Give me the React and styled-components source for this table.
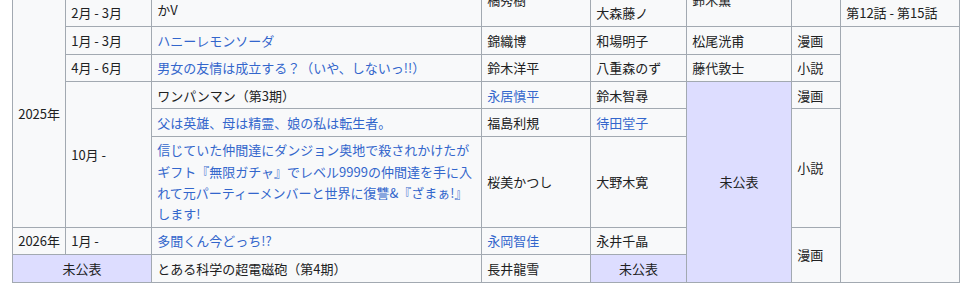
import React from "react"
import styled, { createGlobalStyle } from "styled-components"

const GlobalStyle = createGlobalStyle`
  body {
    margin: 0;
    background: #ffffff;
    font-family: "Noto Sans CJK JP", sans-serif;
    color: #202122;
  }
`

const Frame = styled.div`
  height: 283px;
  overflow: hidden;
  padding-left: 12px;
`

const Table = styled.table`
  margin-top: -56px;
  width: 948px;
  table-layout: fixed;
  border-collapse: collapse;
  border: 1px solid #a2a9b1;
  font-size: 13px;
  line-height: 21.2px;
`

const Cell = styled.td`
  border: 1px solid #a2a9b1;
  padding: 2.6px 5.2px;
  vertical-align: middle;
  white-space: ${p => (p.$nowrap ? "nowrap" : "normal")};
  background: ${p => (p.$tba ? "#ddddff" : "#f8f9fa")};
  text-align: ${p => (p.$tba ? "center" : "left")};
`

const Link = styled.a`
  color: #3366cc;
  text-decoration: none;
`

const widths = [53, 86, 330, 109, 96, 105, 49, 119]

const App = () => {
  return (
    <Frame>
      <GlobalStyle />
      <Table>
        <colgroup>
          {widths.map((w, i) => (
            <col key={i} style={{ width: w }} />
          ))}
        </colgroup>
        <tbody>
          <tr>
            <Cell rowSpan={2} $nowrap>2024年</Cell>
            <Cell rowSpan={2} $nowrap>10月 - 12月</Cell>
            <Cell><Link>魔王2099</Link></Cell>
            <Cell>上田繁</Cell>
            <Cell>小林一三</Cell>
            <Cell>マッドハウス</Cell>
            <Cell rowSpan={3}>小説</Cell>
            <Cell>全12話</Cell>
          </tr>
          <tr>
            <Cell rowSpan={2}>ダンジョンに出会いを求めるのは間違っているだろうかV</Cell>
            <Cell rowSpan={2}>橘秀樹</Cell>
            <Cell>大森藤ノ</Cell>
            <Cell rowSpan={2}>鈴木薫</Cell>
            <Cell>第1話 - 第11話</Cell>
          </tr>
          <tr>
            <Cell rowSpan={6} $nowrap>2025年</Cell>
            <Cell>2月 - 3月</Cell>
            <Cell>大森藤ノ</Cell>
            <Cell $nowrap>第12話 - 第15話</Cell>
          </tr>
          <tr>
            <Cell>1月 - 3月</Cell>
            <Cell><Link>ハニーレモンソーダ</Link></Cell>
            <Cell>錦織博</Cell>
            <Cell>和場明子</Cell>
            <Cell>松尾洸甫</Cell>
            <Cell>漫画</Cell>
            <Cell rowSpan={7}></Cell>
          </tr>
          <tr>
            <Cell>4月 - 6月</Cell>
            <Cell><Link>{"男女の友情は成立する\uFF1F\uFF08いや、しないっ!!\uFF09"}</Link></Cell>
            <Cell>鈴木洋平</Cell>
            <Cell>八重森のず</Cell>
            <Cell>藤代敦士</Cell>
            <Cell>小説</Cell>
          </tr>
          <tr>
            <Cell rowSpan={3}>10月 -</Cell>
            <Cell>{"ワンパンマン\uFF08第3期\uFF09"}</Cell>
            <Cell><Link>永居慎平</Link></Cell>
            <Cell>鈴木智尋</Cell>
            <Cell rowSpan={5} $tba>未公表</Cell>
            <Cell>漫画</Cell>
          </tr>
          <tr>
            <Cell><Link>父は英雄、母は精霊、娘の私は転生者。</Link></Cell>
            <Cell>福島利規</Cell>
            <Cell><Link>待田堂子</Link></Cell>
            <Cell rowSpan={2}>小説</Cell>
          </tr>
          <tr>
            <Cell>
              <Link>信じていた仲間達にダンジョン奥地で殺されかけたがギフト『無限ガチャ』でレベル9999の仲間達を手に入れて元パーティーメンバーと世界に復讐&『ざまぁ!』します!</Link>
            </Cell>
            <Cell>桜美かつし</Cell>
            <Cell>大野木寛</Cell>
          </tr>
          <tr>
            <Cell $nowrap>2026年</Cell>
            <Cell>1月 -</Cell>
            <Cell><Link>多聞くん今どっち!?</Link></Cell>
            <Cell><Link>永岡智佳</Link></Cell>
            <Cell>永井千晶</Cell>
            <Cell rowSpan={2}>漫画</Cell>
          </tr>
          <tr>
            <Cell colSpan={2} $tba>未公表</Cell>
            <Cell>{"とある科学の超電磁砲\uFF08第4期\uFF09"}</Cell>
            <Cell>長井龍雪</Cell>
            <Cell $tba>未公表</Cell>
          </tr>
        </tbody>
      </Table>
    </Frame>
  )
}

export default App
